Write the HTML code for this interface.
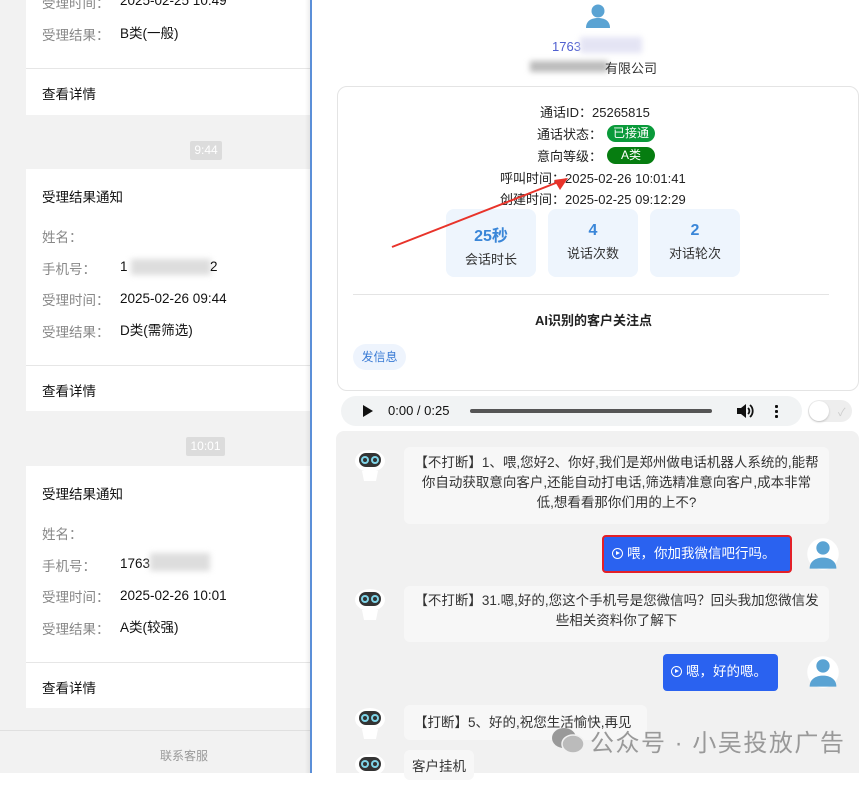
<!DOCTYPE html>
<html><head><meta charset="utf-8"><style>
*{margin:0;padding:0;box-sizing:border-box}
body{width:867px;height:773px;overflow:hidden;position:relative;background:#fff;font-family:"Liberation Sans","Noto Sans CJK SC",sans-serif;font-size:13px;color:#222}
.a{position:absolute}
#left{left:0;top:0;width:311px;height:773px;background:#f2f2f2}
.card{position:absolute;left:26px;width:285px;background:#fff}
.t{position:absolute;left:16px;font-size:13.5px;color:#111}
.lb{position:absolute;left:16px;color:#888;font-size:13.5px}
.v{position:absolute;left:94px;color:#111;font-size:13.5px;line-height:18px}
.ln{position:absolute;left:0;right:0;height:1px;background:#e6e6e6}
.ts{position:absolute;background:#dcdcdc;color:#fff;font-size:12px;text-align:center;line-height:19px;border-radius:2px}
.blur{position:absolute;background:#ddd;filter:blur(3px)}
.stat{position:absolute;top:209px;height:68px;background:#eef5fd;border-radius:8px;text-align:center}
.stat b{display:block;color:#3a86d8;font-size:16px;margin-top:13px}
.stat span{display:block;color:#333;margin-top:3px}
.robot{position:absolute;left:353px;width:34px;height:34px}
.bub{position:absolute;background:#f7f7f7;border-radius:6px;color:#333;font-size:13.5px;line-height:20px;text-align:center}
.blue{position:absolute;background:#2a62f0;color:#fff;border-radius:4px;font-size:13.5px;line-height:36px;padding-left:8px}
.play{display:inline-block;width:11px;height:11px;border:1.5px solid #fff;border-radius:50%;vertical-align:-1px;margin-right:4px;position:relative}
.play:after{content:"";position:absolute;left:3px;top:2px;border-left:4px solid #fff;border-top:2.5px solid transparent;border-bottom:2.5px solid transparent}
</style></head><body>
<div id="left" class="a">
 <div class="card" style="top:0;height:115px">
  <div class="lb" style="top:-8px">受理时间：</div><div class="v" style="top:-8px">2025-02-25 10:49</div>
  <div class="lb" style="top:24px">受理结果：</div><div class="v" style="top:25px">B类(一般)</div>
  <div class="ln" style="top:68px"></div>
  <div class="t" style="top:83px">查看详情</div>
 </div>
 <div class="ts" style="left:190px;top:141px;width:32px">9:44</div>
 <div class="card" style="top:169px;height:242px">
  <div class="t" style="top:17px">受理结果通知</div>
  <div class="lb" style="top:57px">姓名：</div>
  <div class="lb" style="top:89px">手机号：</div><div class="v" style="top:89px">1</div><div class="blur" style="left:105px;top:90px;width:80px;height:16px"></div><div class="v" style="top:89px;left:184px">2</div>
  <div class="lb" style="top:120px">受理时间：</div><div class="v" style="top:121px">2025-02-26 09:44</div>
  <div class="lb" style="top:152px">受理结果：</div><div class="v" style="top:153px">D类(需筛选)</div>
  <div class="ln" style="top:196px"></div>
  <div class="t" style="top:211px">查看详情</div>
 </div>
 <div class="ts" style="left:186px;top:437px;width:39px">10:01</div>
 <div class="card" style="top:466px;height:242px">
  <div class="t" style="top:17px">受理结果通知</div>
  <div class="lb" style="top:57px">姓名：</div>
  <div class="lb" style="top:89px">手机号：</div><div class="v" style="top:89px">1763</div><div class="blur" style="left:124px;top:87px;width:60px;height:18px"></div>
  <div class="lb" style="top:120px">受理时间：</div><div class="v" style="top:121px">2025-02-26 10:01</div>
  <div class="lb" style="top:152px">受理结果：</div><div class="v" style="top:153px">A类(较强)</div>
  <div class="ln" style="top:196px"></div>
  <div class="t" style="top:211px">查看详情</div>
 </div>
 <div class="a" style="left:0;top:730px;width:311px;height:1px;background:#e0e0e0"></div>
 <div class="a" style="left:0;top:747px;width:368px;text-align:center;color:#999;font-size:12px">联系客服</div>
</div>
<div class="a" style="left:305px;top:0;width:6px;height:773px;background:linear-gradient(90deg,rgba(0,0,0,0),rgba(0,0,0,.08))"></div>
<div class="a" style="left:310px;top:0;width:2px;height:773px;background:#5b8fd8"></div>

<svg class="a" style="left:584px;top:2px" width="28" height="26" viewBox="0 0 28 26"><circle cx="14" cy="9" r="6.5" fill="#5aa3d3"/><path d="M2 26c0-7 5-10 12-10s12 3 12 10z" fill="#5aa3d3"/></svg>
<div class="a" style="left:552px;top:39px;color:#5060d0;font-size:13px">1763</div><div class="blur" style="left:580px;top:37px;width:62px;height:16px;background:#e4e4f4"></div>
<div class="blur" style="left:530px;top:61px;width:78px;height:11px;background:#bbb"></div><div class="a" style="left:605px;top:58px;font-size:13px;color:#333">有限公司</div>

<div class="a" style="left:337px;top:86px;width:522px;height:305px;border:1px solid #e4e4e4;border-radius:10px"></div>
<div class="a" style="left:540px;top:102px">通话ID：25265815</div>
<div class="a" style="left:537px;top:124px">通话状态：</div><div class="a" style="left:607px;top:125px;width:48px;height:17px;border-radius:9px;background:#0a9a3a;color:#fff;font-size:12px;text-align:center;line-height:17px">已接通</div>
<div class="a" style="left:537px;top:146px">意向等级：</div><div class="a" style="left:607px;top:147px;width:48px;height:17px;border-radius:9px;background:#067d10;color:#fff;font-size:12px;text-align:center;line-height:17px">A类</div>
<div class="a" style="left:500px;top:168px">呼叫时间：2025-02-26 10:01:41</div>
<div class="a" style="left:500px;top:189px">创建时间：2025-02-25 09:12:29</div>
<div class="stat" style="left:446px;width:90px"><b>25秒</b><span>会话时长</span></div>
<div class="stat" style="left:548px;width:90px"><b>4</b><span>说话次数</span></div>
<div class="stat" style="left:650px;width:90px"><b>2</b><span>对话轮次</span></div>
<div class="a" style="left:353px;top:294px;width:476px;height:1px;background:#e4e4e4"></div>
<div class="a" style="left:535px;top:310px;font-weight:bold;font-size:13px">AI识别的客户关注点</div>
<div class="a" style="left:353px;top:344px;width:53px;height:26px;border-radius:13px;background:#eef4fd;color:#3a7bd5;font-size:12px;line-height:26px;text-align:center">发信息</div>

<svg class="a" style="left:390px;top:170px" width="190" height="80"><path d="M2 77L176 9" stroke="#e8332a" stroke-width="2"/><path d="M178 8L164 10L170 20Z" fill="#e8332a"/></svg>

<div class="a" style="left:341px;top:396px;width:461px;height:30px;border-radius:15px;background:#f1f3f4"></div>
<div class="a" style="left:363px;top:405px;border-left:10px solid #111;border-top:6px solid transparent;border-bottom:6px solid transparent"></div>
<div class="a" style="left:388px;top:403px;font-size:13px;color:#111">0:00 / 0:25</div>
<div class="a" style="left:470px;top:409px;width:242px;height:4px;border-radius:2px;background:#555"></div>
<svg class="a" style="left:736px;top:403px" width="18" height="16" viewBox="0 0 18 16"><path d="M1 5h4l5-4v14l-5-4H1z" fill="#111"/><path d="M12 5a4 4 0 010 6M14 2a8 8 0 010 12" stroke="#111" stroke-width="1.8" fill="none"/></svg>
<div class="a" style="left:775px;top:404px;width:3px;height:15px;background:radial-gradient(circle,#111 1.5px,transparent 1.6px) 0 0/3px 5px"></div>
<div class="a" style="left:808px;top:400px;width:44px;height:22px;border-radius:11px;background:#eee"></div>
<div class="a" style="left:809px;top:401px;width:20px;height:20px;border-radius:50%;background:#fff;box-shadow:0 1px 2px rgba(0,0,0,.2)"></div>
<div class="a" style="left:838px;top:404px;color:#ccc;font-size:11px">✓</div>

<div class="a" style="left:336px;top:431px;width:523px;height:342px;background:#f1f1f1;border-radius:8px 8px 0 0"></div>
<svg width="0" height="0" style="position:absolute"><defs><g id="rb"><ellipse cx="17" cy="13" rx="15" ry="11" fill="#fff"/><rect x="6" y="5" width="22" height="14" rx="7" fill="#333"/><circle cx="12" cy="12" r="4" fill="#7fd4e8"/><circle cx="22" cy="12" r="4" fill="#7fd4e8"/><circle cx="12" cy="12" r="2" fill="#333"/><circle cx="22" cy="12" r="2" fill="#333"/><path d="M9 23h16l-2 10h-12z" fill="#fff"/></g></defs></svg>
<svg class="robot" style="top:448px" viewBox="0 0 34 34"><use href="#rb"/></svg>
<svg class="robot" style="top:587px" viewBox="0 0 34 34"><use href="#rb"/></svg>
<svg class="robot" style="top:706px" viewBox="0 0 34 34"><use href="#rb"/></svg>
<svg class="robot" style="top:752px" viewBox="0 0 34 34"><use href="#rb"/></svg>

<div class="bub" style="left:404px;top:447px;width:425px;height:77px;padding:6px 10px 0 10px">【不打断】1、喂,您好2、你好,我们是郑州做电话机器人系统的,能帮你自动获取意向客户,还能自动打电话,筛选精准意向客户,成本非常低,想看看那你们用的上不?</div>
<div class="blue" style="left:602px;top:535px;width:190px;height:38px;border:2px solid #e32028;line-height:34px"><span class="play"></span>喂，你加我微信吧行吗。</div>
<svg class="a" style="left:806px;top:538px" width="34" height="32" viewBox="0 0 28 26"><circle cx="14" cy="13" r="13" fill="#fff"/><circle cx="14" cy="8" r="5.5" fill="#5aa3d3"/><path d="M3 25c0-6 5-9 11-9s11 3 11 9z" fill="#5aa3d3"/></svg>
<div class="bub" style="left:404px;top:586px;width:425px;height:56px;padding:5px 10px 0 10px">【不打断】31.嗯,好的,您这个手机号是您微信吗？回头我加您微信发些相关资料你了解下</div>
<div class="blue" style="left:663px;top:654px;width:115px;height:37px"><span class="play"></span>嗯，好的嗯。</div>
<svg class="a" style="left:806px;top:656px" width="34" height="32" viewBox="0 0 28 26"><circle cx="14" cy="13" r="13" fill="#fff"/><circle cx="14" cy="8" r="5.5" fill="#5aa3d3"/><path d="M3 25c0-6 5-9 11-9s11 3 11 9z" fill="#5aa3d3"/></svg>
<div class="bub" style="left:404px;top:705px;width:243px;height:35px;line-height:35px;text-align:left;padding-left:10px">【打断】5、好的,祝您生活愉快,再见</div>
<div class="bub" style="left:404px;top:750px;width:70px;height:30px;line-height:34px;text-align:left;padding-left:8px">客户挂机</div>
<svg class="a" style="left:551px;top:727px" width="34" height="28" viewBox="0 0 34 28"><ellipse cx="13" cy="11" rx="12" ry="10" fill="#999"/><ellipse cx="22" cy="17" rx="11" ry="9" fill="#bbb" stroke="#f1f1f1" stroke-width="1.5"/></svg>
<div class="a" style="left:590px;top:723px;font-size:24px;color:#999;letter-spacing:1.5px">公众号 · 小吴投放广告</div>
</body></html>
